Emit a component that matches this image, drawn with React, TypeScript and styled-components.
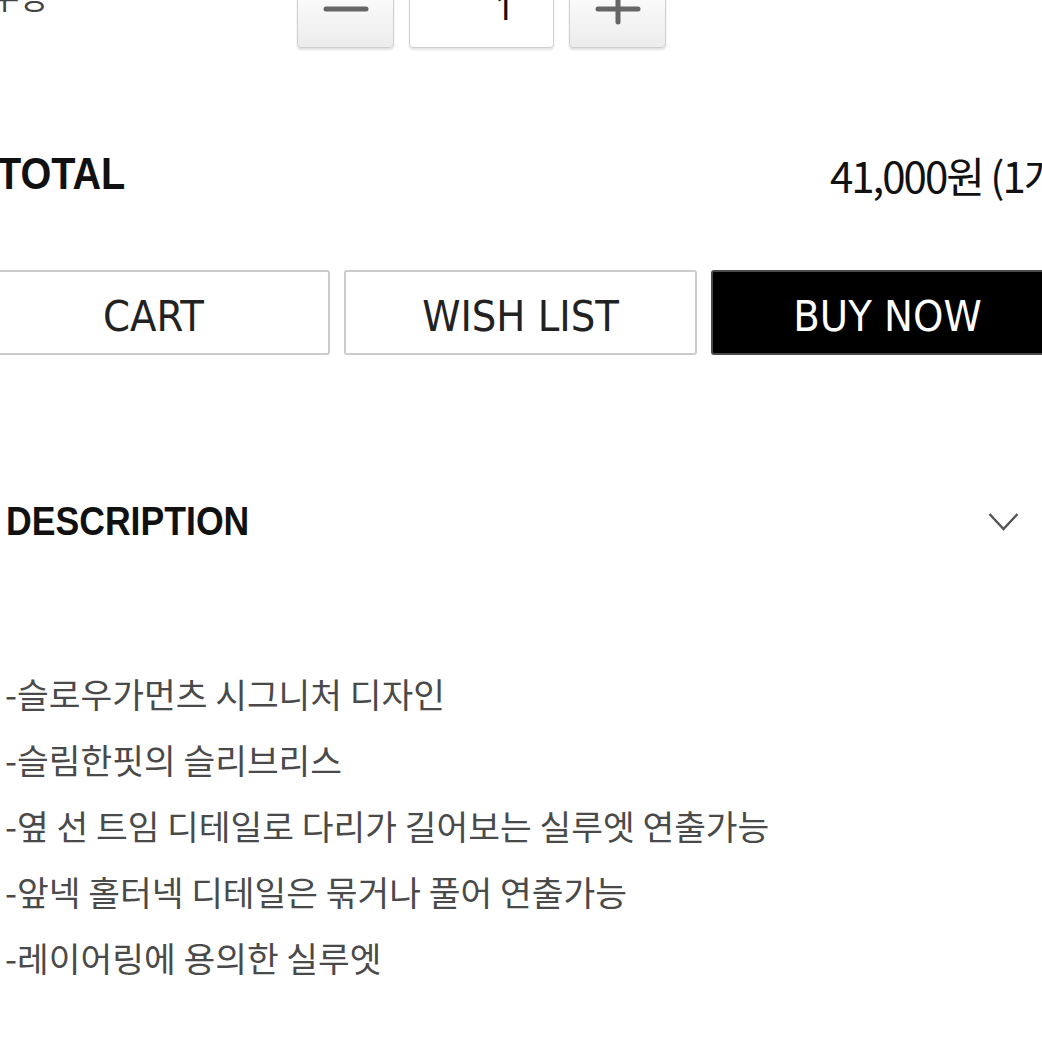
import React from "react";
import styled, { createGlobalStyle } from "styled-components";

const GlobalStyle = createGlobalStyle`
  html, body {
    margin: 0;
    padding: 0;
    background: #ffffff;
    overflow: hidden;
  }
  body {
    width: 1042px;
    height: 1042px;
  }
`;

const Page = styled.div`
  width: 1088px;
  margin: -12px 0 0 -23px;
  font-family: "Noto Sans CJK KR", "Noto Sans", sans-serif;
  color: #111;
`;

const QtyRow = styled.div`
  display: flex;
  align-items: flex-start;
  height: 60px;
`;

const QtyLabel = styled.div`
  width: 307px;
  padding-left: 13px;
  margin-top: -9px;
  font-size: 32px;
  line-height: 1;
  color: #444;
`;

const QtyControls = styled.div`
  display: flex;
  gap: 15px;
`;

const StepButton = styled.button`
  width: 97px;
  height: 60px;
  padding: 0;
  border: 1px solid #cfcfcf;
  border-radius: 4px;
  background: linear-gradient(#fdfdfd, #ececec);
  box-shadow: 0 2px 2px rgba(0, 0, 0, 0.12);
  display: flex;
  align-items: flex-start;
  justify-content: center;
`;

const QtyInput = styled.div`
  width: 145px;
  height: 60px;
  box-sizing: border-box;
  border: 1px solid #cfcfcf;
  border-radius: 4px;
  background: #fff;
  box-shadow: 0 2px 2px rgba(0, 0, 0, 0.1);
  font-family: "Noto Sans", sans-serif;
  font-size: 36px;
  line-height: 1;
  text-align: right;
  padding: 0 38px 0 0;
  color: #111;
`;

const TotalRow = styled.div`
  display: flex;
  align-items: center;
  height: 60px;
  margin-top: 96px;
  padding-left: 20px;
`;

const TotalLabel = styled.div`
  flex: 1;
`;

const Condensed = styled.span<{ $size: number; $scale: number }>`
  display: inline-block;
  font-family: "Liberation Sans", Arial, sans-serif;
  font-weight: 700;
  font-size: ${(p) => p.$size}px;
  transform: scaleX(${(p) => p.$scale});
  transform-origin: left center;
  color: #111;
`;

const Price = styled.div`
  width: 235px;
  white-space: nowrap;
  font-size: 42px;
  letter-spacing: -2px;
  color: #111;
`;

const ActionRow = styled.div`
  display: grid;
  grid-template-columns: repeat(3, 353px);
  gap: 14px;
  margin-top: 66px;
`;

const ActionButton = styled.button<{ $primary?: boolean }>`
  height: 85px;
  border: 2px solid ${(p) => (p.$primary ? "#4a4a4a" : "#cccccc")};
  border-radius: 3px;
  background: ${(p) => (p.$primary ? "#000" : "#fff")};
  color: ${(p) => (p.$primary ? "#fff" : "#222")};
  font-family: "DejaVu Sans", sans-serif;
  font-stretch: condensed;
  font-size: 43px;
  padding: 6px 0 0;
`;

const DescHeader = styled.div`
  display: flex;
  align-items: center;
  justify-content: space-between;
  height: 60px;
  margin-top: 136px;
  padding: 0 46px 0 29px;
`;

const DescTitle = styled.h3`
  margin: 0;
`;

const DescList = styled.div`
  margin-top: 109px;
  padding-left: 28px;
  font-size: 34.5px;
  line-height: 66px;
  color: #4a4a4a;
`;

const lines = [
  "-슬로우가먼츠 시그니처 디자인",
  "-슬림한핏의 슬리브리스",
  "-옆 선 트임 디테일로 다리가 길어보는 실루엣 연출가능",
  "-앞넥 홀터넥 디테일은 묶거나 풀어 연출가능",
  "-레이어링에 용의한 실루엣",
];

const App = () => {
  return (
    <>
      <GlobalStyle />
      <Page>
        <QtyRow>
          <QtyLabel>수량</QtyLabel>
          <QtyControls>
            <StepButton aria-label="minus">
              <svg width="48" height="30" viewBox="0 0 48 30">
                <line x1="4" y1="20" x2="44" y2="20" stroke="#666" strokeWidth="5" strokeLinecap="round" />
              </svg>
            </StepButton>
            <QtyInput>1</QtyInput>
            <StepButton aria-label="plus">
              <svg width="48" height="36" viewBox="0 0 48 36">
                <line x1="4" y1="20" x2="44" y2="20" stroke="#666" strokeWidth="5" strokeLinecap="round" />
                <line x1="24" y1="2" x2="24" y2="33" stroke="#666" strokeWidth="5" strokeLinecap="round" />
              </svg>
            </StepButton>
          </QtyControls>
        </QtyRow>

        <TotalRow>
          <TotalLabel>
            <Condensed $size={44} $scale={0.9}>TOTAL</Condensed>
          </TotalLabel>
          <Price>41,000원 (1개)</Price>
        </TotalRow>

        <ActionRow>
          <ActionButton>CART</ActionButton>
          <ActionButton>WISH LIST</ActionButton>
          <ActionButton $primary>BUY NOW</ActionButton>
        </ActionRow>

        <DescHeader>
          <DescTitle>
            <Condensed $size={40} $scale={0.89}>DESCRIPTION</Condensed>
          </DescTitle>
          <svg width="31" height="19" viewBox="0 0 31 19">
            <polyline points="1.5,2 15.5,17 29.5,2" fill="none" stroke="#555" strokeWidth="2.5" />
          </svg>
        </DescHeader>

        <DescList>
          {lines.map((l) => (
            <div key={l}>{l}</div>
          ))}
        </DescList>
      </Page>
    </>
  );
};

export default App;
